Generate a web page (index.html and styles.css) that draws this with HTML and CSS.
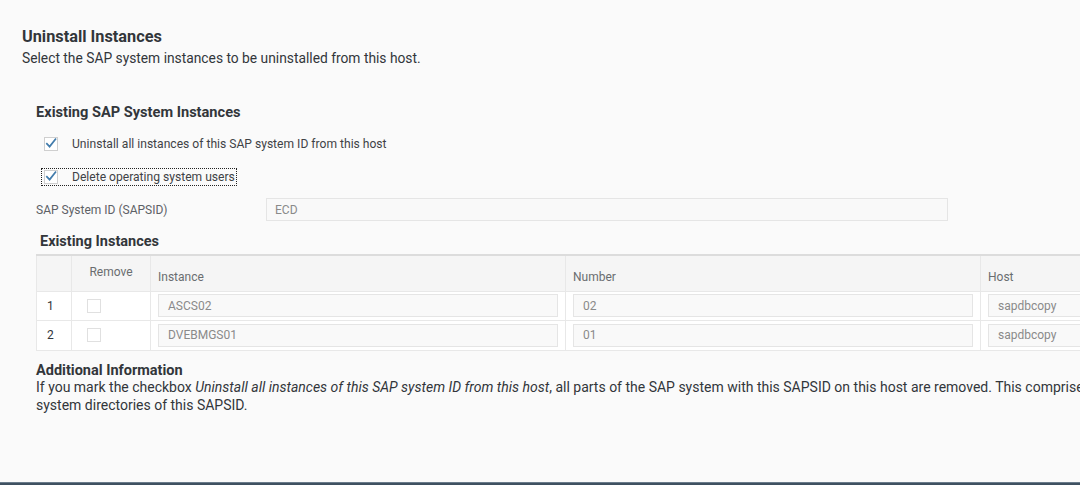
FILE: index.html
```html
<!DOCTYPE html>
<html lang="en">
<head>
<meta charset="utf-8">
<title>Uninstall Instances</title>
<link rel="stylesheet" href="styles.css">
</head>
<body>
<div class="page">
  <main class="content">
    <h1 class="title">Uninstall Instances</h1>
    <p class="subtitle">Select the SAP system instances to be uninstalled from this host.</p>

    <section class="group">
      <h2 class="group-title">Existing SAP System Instances</h2>
      <div class="checks">
        <label class="check">
          <span class="box"><svg viewBox="0 0 14 14" width="14" height="14"><path d="M2.3 7.2 L5.6 10.6 L12 2.4" fill="none" stroke="#427cac" stroke-width="1.7"/></svg></span>
          <span class="check-label">Uninstall all instances of this SAP system ID from this host</span>
        </label>
        <label class="check focused">
          <span class="box"><svg viewBox="0 0 14 14" width="14" height="14"><path d="M2.3 7.2 L5.6 10.6 L12 2.4" fill="none" stroke="#427cac" stroke-width="1.7"/></svg></span>
          <span class="check-label">Delete operating system users</span>
        </label>
      </div>

      <div class="field">
        <span class="field-label">SAP System ID (SAPSID)</span>
        <span class="input field-input">ECD</span>
      </div>

      <h2 class="table-title">Existing Instances</h2>
      <table class="grid">
        <thead>
          <tr>
            <th class="c-num"></th>
            <th class="c-remove">Remove</th>
            <th class="c-wide">Instance</th>
            <th class="c-wide">Number</th>
            <th class="c-wide">Host</th>
          </tr>
        </thead>
        <tbody>
          <tr>
            <td class="c-num">1</td>
            <td class="c-remove"><span class="box"></span></td>
            <td><span class="input">ASCS02</span></td>
            <td><span class="input">02</span></td>
            <td><span class="input">sapdbcopy</span></td>
          </tr>
          <tr>
            <td class="c-num">2</td>
            <td class="c-remove"><span class="box"></span></td>
            <td><span class="input">DVEBMGS01</span></td>
            <td><span class="input">01</span></td>
            <td><span class="input">sapdbcopy</span></td>
          </tr>
        </tbody>
      </table>

      <h2 class="info-title">Additional Information</h2>
      <p class="info-text">If you mark the checkbox <em>Uninstall all instances of this SAP system ID from this host</em>, all parts of the SAP system with this SAPSID on this host are removed. This comprises the database, the instances and the<br>system directories of this SAPSID.</p>
    </section>
  </main>
  <footer class="footer-bar"></footer>
</div>
</body>
</html>
```

FILE: styles.css
```css
* { box-sizing: border-box; }

html, body {
  margin: 0;
  padding: 0;
  height: 100%;
  overflow: hidden;
  background: #fafafa;
}

body {
  font-family: Roboto, "Liberation Sans", Arial, sans-serif;
  color: #32363a;
}

.page {
  height: 485px;
  display: flex;
  flex-direction: column;
}

.content {
  flex: 1;
  padding: 28px 0 0 22px;
  width: 1420px;
}

.title {
  margin: 0;
  font-size: 16.3px;
  font-weight: 700;
  line-height: 18px;
  color: #32363a;
}

.subtitle {
  margin: 3px 0 0;
  font-size: 13.8px;
  line-height: 18px;
  color: #32363a;
}

.group {
  padding: 36px 0 0 14px;
}

.group-title {
  margin: 0 0 14px;
  font-size: 14.6px;
  font-weight: 700;
  line-height: 18px;
  color: #32363a;
}

.checks {
  display: flex;
  flex-direction: column;
  align-items: flex-start;
  gap: 15px;
}

.check {
  display: inline-flex;
  align-items: center;
  gap: 14px;
  height: 18px;
  margin-left: 8px;
  font-size: 12.1px;
  color: #3f4246;
}

.check.focused {
  height: 16px;
  margin: 1px 0 1px 6px;
  padding: 0 1px 0 2px;
  outline: 1px dotted #222;
}

.box {
  display: inline-block;
  position: relative;
  width: 14px;
  height: 14px;
  border: 1px solid #cfcfcf;
  background: #fff;
  flex: none;
}

.box svg {
  position: absolute;
  left: -1px;
  top: -2px;
}

.field {
  display: flex;
  align-items: center;
  margin-top: 12px;
  height: 23px;
}

.field-label {
  width: 230px;
  font-size: 12px;
  color: #5d6166;
}

.input {
  display: flex;
  align-items: center;
  height: 23px;
  padding-left: 9px;
  border: 1px solid #e5e5e5;
  background: #f9f9f9;
  font-size: 12px;
  color: #8a8a8a;
}

.field-input {
  width: 682px;
  padding-left: 8px;
}

.table-title {
  margin: 12px 0 3px 4px;
  font-size: 14.5px;
  font-weight: 700;
  line-height: 18px;
  color: #32363a;
}

.grid {
  border-collapse: collapse;
  table-layout: fixed;
  width: 1358px;
  border-top: 2px solid #dcdcdc;
  font-size: 12px;
}

.grid th,
.grid td {
  border: 1px solid #e8e8e8;
  padding: 0 7px;
}

.grid th {
  height: 36px;
  font-weight: 400;
  color: #6a6d70;
  text-align: left;
  vertical-align: bottom;
  padding-bottom: 7px;
  background: #f5f5f5;
}

.grid th.c-remove {
  text-align: center;
  vertical-align: top;
  padding-top: 9px;
  padding-bottom: 0;
}

.grid td {
  height: 29px;
  background: #fff;
  color: #32363a;
}

.grid tbody tr:last-child td { height: 30px; }

.c-num { width: 35px; }
.grid td.c-num { padding-left: 10px; }
.c-remove { width: 79px; }
.grid td.c-remove { padding-left: 15px; }
.grid td.c-remove .box { display: block; border-color: #e0e0e0; }
.c-wide { width: 415px; }

.info-title {
  margin: 12px 0 0;
  font-size: 14.5px;
  font-weight: 700;
  line-height: 16px;
  color: #32363a;
}

.info-text {
  margin: -1px 0 0;
  white-space: nowrap;
  font-size: 14px;
  line-height: 18px;
  color: #32363a;
}

.footer-bar {
  flex: none;
  height: 3px;
  background: #3f5161;
  border-top: 1px solid #6b7c8b;
}
```
